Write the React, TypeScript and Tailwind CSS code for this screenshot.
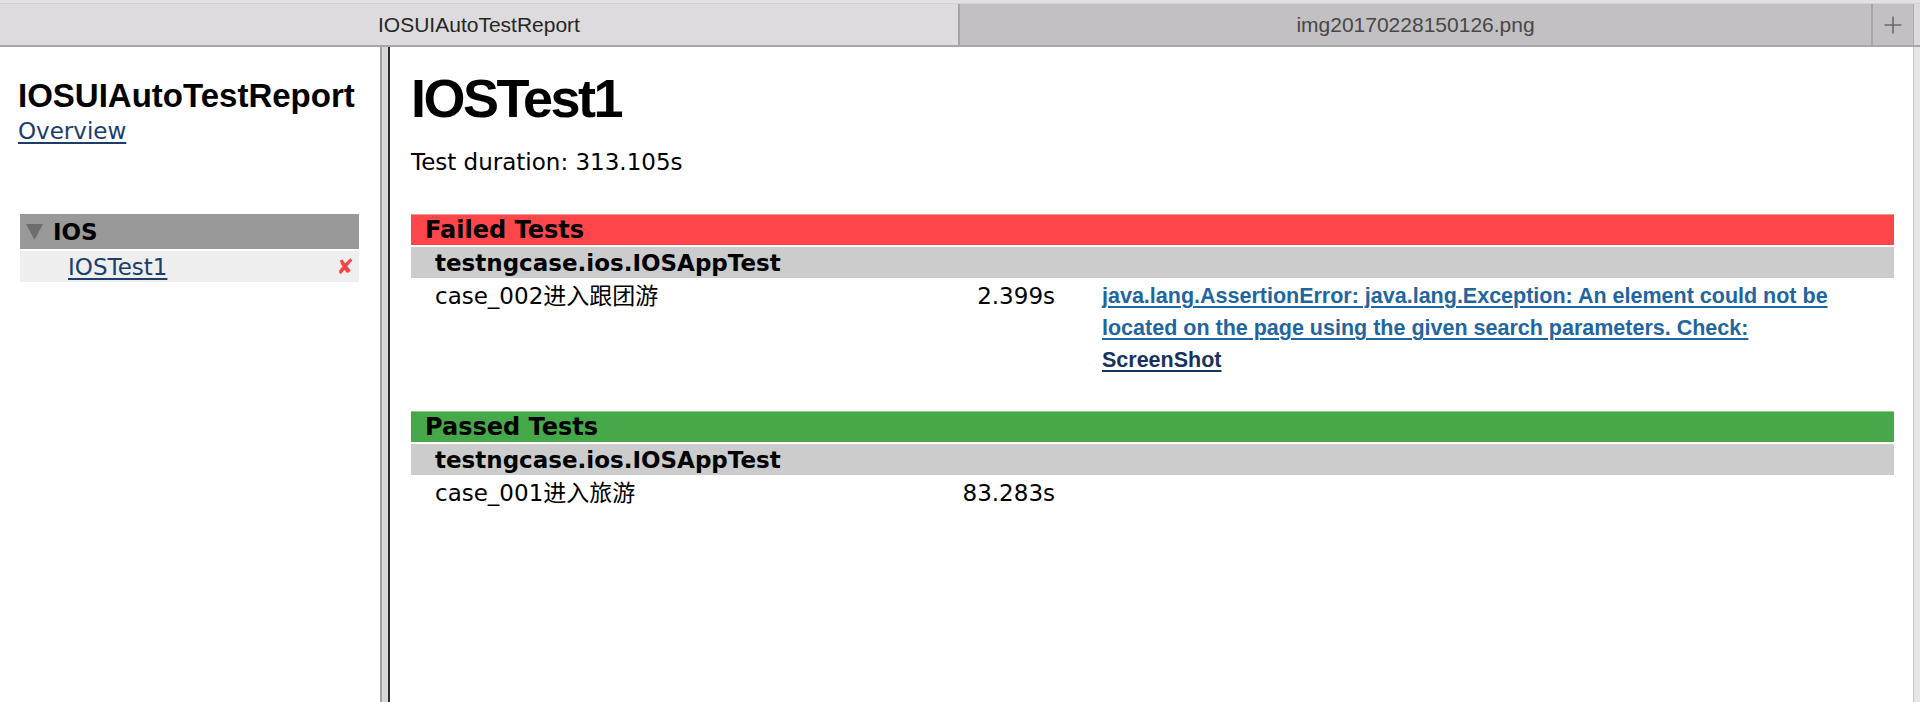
import React from "react";

const body = "font-['DejaVu_Sans','Noto_Sans_CJK_SC',sans-serif]";
const arial = "font-['Liberation_Sans','Noto_Sans_CJK_SC',sans-serif]";

function SectionHeader({ title, color }: { title: string; color: string }) {
  return (
    <div className={`h-[31px] flex items-center pl-[14px] ${color} border-t border-[#ffffff66]`}>
      <span className={`${body} font-bold text-[24px] leading-[30px] text-black`}>{title}</span>
    </div>
  );
}

function ClassRow({ name }: { name: string }) {
  return (
    <div className="h-[31px] flex items-center pl-[24px] bg-[#cccccc]">
      <span className={`${body} font-bold text-[23px] leading-[30px] text-black`}>{name}</span>
    </div>
  );
}

export default function App() {
  return (
    <div className="w-[1920px] h-[702px] flex flex-col bg-white overflow-hidden">
      {/* Tab bar */}
      <div className="h-[47px] flex flex-col bg-[#e3e1e3]">
        <div className="h-[4px] border-b border-[#d2d0d2]" />
        <div className={`flex-1 flex border-b-2 border-[#a8a6a8] ${arial}`}>
          <div className="w-[958px] bg-[#dddbdd] flex items-center justify-center text-[21px] text-[#262626]">
            IOSUIAutoTestReport
          </div>
          <div className="flex-1 bg-[#c2c0c2] border-l-2 border-[#a6a4a6] flex items-center justify-center text-[21px] text-[#474747]">
            img20170228150126.png
          </div>
          <div className="w-[42px] bg-[#c2c0c2] border-l-2 border-[#a6a4a6] flex items-center justify-center">
            <svg width="20" height="20" viewBox="0 0 20 20">
              <path d="M10 1.5V18.5M1.5 10H18.5" stroke="#6b6a6b" strokeWidth="1.6" />
            </svg>
          </div>
          <div className="w-[7px] bg-[#dcdadc] border-l border-[#b0aeb0]" />
        </div>
      </div>

      {/* Body */}
      <div className="flex-1 flex">
        {/* Sidebar */}
        <div className="w-[380px] flex flex-col pt-[30px]">
          <div className={`${arial} font-bold text-[33px] leading-[38px] text-black pl-[18px]`}>
            IOSUIAutoTestReport
          </div>
          <div className={`${body} text-[23px] leading-[28px] pl-[18px] mt-[2px]`}>
            <a href="#" className="text-[#1b3d6b] underline underline-offset-[3px] decoration-[1.5px]">
              Overview
            </a>
          </div>
          <div className="mt-[69px] ml-[20px] w-[339px] flex flex-col gap-[2px]">
            <div className="h-[35px] bg-[#999999] flex items-center">
              <svg width="17" height="16" viewBox="0 0 17 16" className="ml-[6px]">
                <polygon points="0,0 17,0 8.5,16" fill="#6e6e6e" />
              </svg>
              <span className={`${body} font-bold text-[23px] leading-[28px] text-black ml-[10px]`}>IOS</span>
            </div>
            <div className="h-[31px] bg-[#eeeeee] flex items-center justify-between pl-[48px] pr-[5px]">
              <a href="#" className={`${body} text-[23px] leading-[28px] text-[#1b3d6b] underline underline-offset-[3px] decoration-[1.5px]`}>
                IOSTest1
              </a>
              <span className={`${body} font-bold text-[21px] leading-[24px] text-[#f24646]`}>✘</span>
            </div>
          </div>
        </div>

        {/* Separator */}
        <div className="w-[10px] bg-[#d8d8d8] border-l-[2px] border-[#a3a3a3] border-r-[2px] border-r-[#2e2e2e]" />

        {/* Main */}
        <div className={`flex-1 flex flex-col pl-[21px] pr-[19px] pt-[20px] ${body}`}>
          <h1 className={`${arial} font-bold text-[54px] leading-[62px] tracking-[-2.5px] text-black`}>IOSTest1</h1>
          <div className="text-[23px] leading-[28px] text-black mt-[19px]">Test duration: 313.105s</div>

          {/* Failed */}
          <div className="mt-[38px] flex flex-col gap-[2px]">
            <SectionHeader title="Failed Tests" color="bg-[#ff464b]" />
            <ClassRow name="testngcase.ios.IOSAppTest" />
            <div className="flex text-[23px] leading-[32px] text-black">
              <div className="w-[470px] pl-[24px]">case_002进入跟团游</div>
              <div className="w-[174px] text-right">2.399s</div>
              <div className={`flex-1 pl-[47px] ${arial} font-bold text-[21.5px] leading-[32px]`}>
                <a href="#" className="text-[#1f66a0] underline underline-offset-[3px] decoration-[1.5px]">
                  java.lang.AssertionError: java.lang.Exception: An element could not be located on the page using the given search parameters. Check:
                </a>
                <div>
                  <a href="#" className="text-[#16325e] underline underline-offset-[3px] decoration-[1.5px]">
                    ScreenShot
                  </a>
                </div>
              </div>
            </div>
          </div>

          {/* Passed */}
          <div className="mt-[35px] flex flex-col gap-[2px]">
            <SectionHeader title="Passed Tests" color="bg-[#47a84a]" />
            <ClassRow name="testngcase.ios.IOSAppTest" />
            <div className="flex text-[23px] leading-[32px] text-black">
              <div className="w-[470px] pl-[24px]">case_001进入旅游</div>
              <div className="w-[174px] text-right">83.283s</div>
              <div className="flex-1" />
            </div>
          </div>
        </div>

        {/* Right edge */}
        <div className="w-[7px] bg-[#e6e6e6] border-l border-[#c4c4c4]" />
      </div>
    </div>
  );
}
